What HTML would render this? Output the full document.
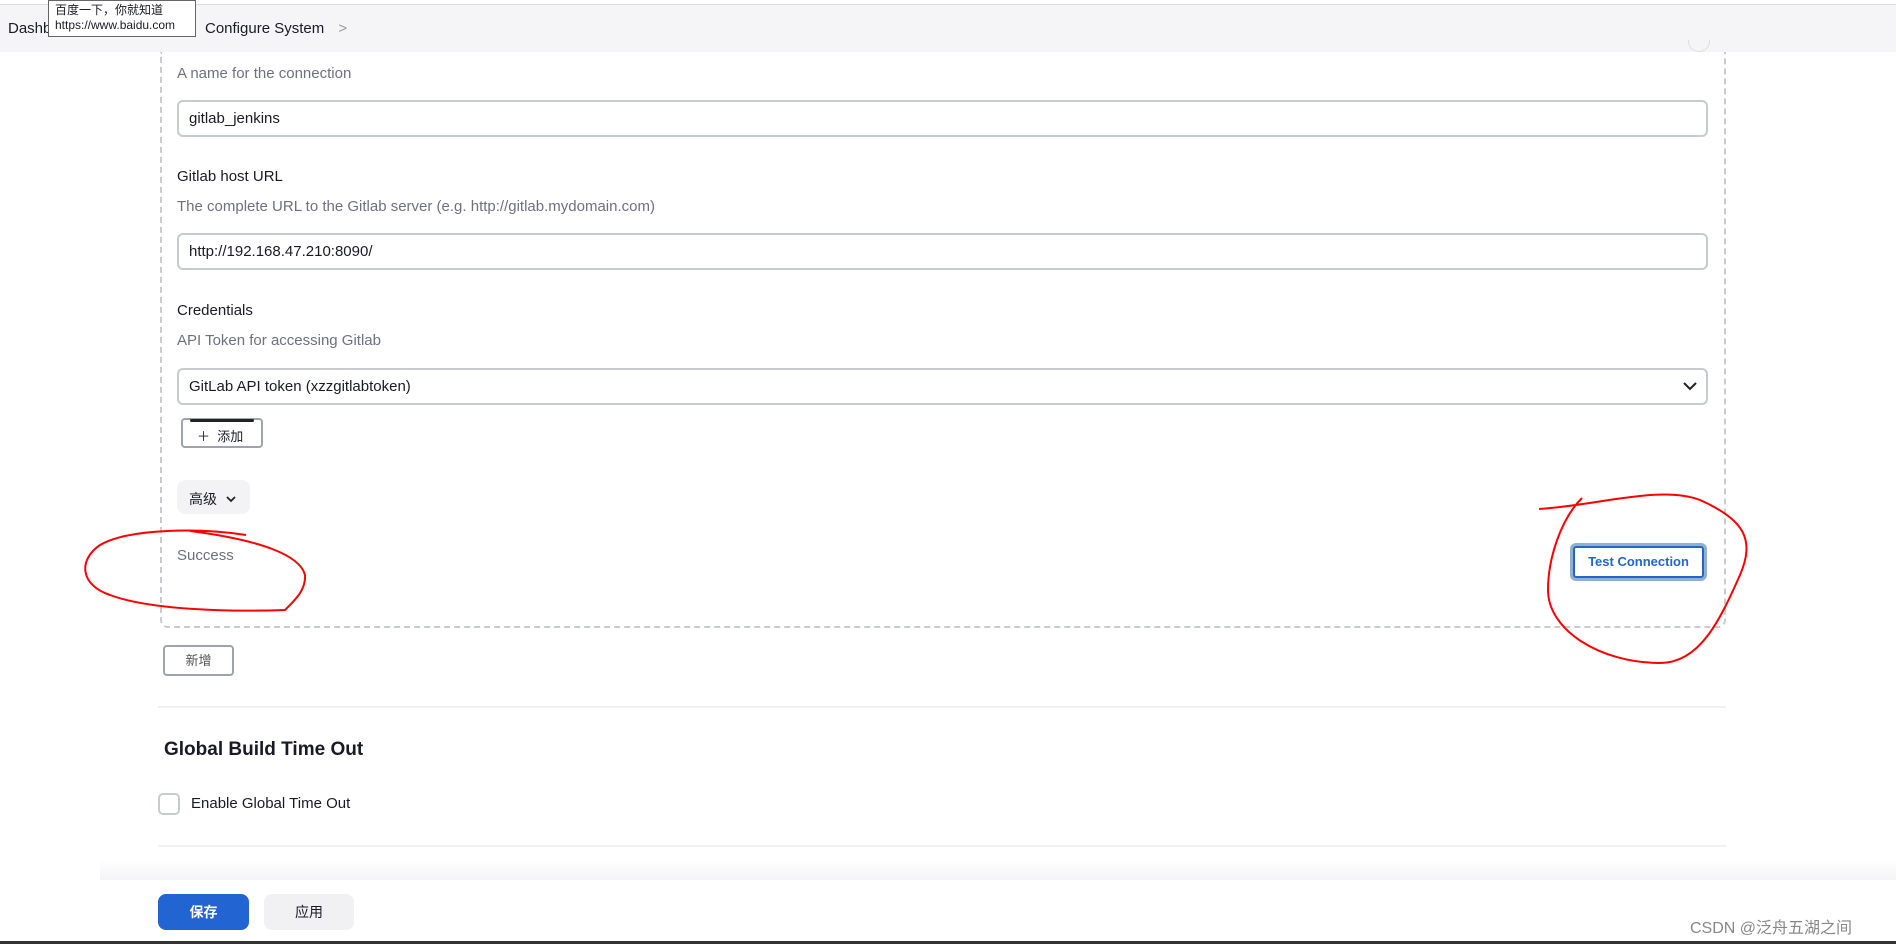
<!DOCTYPE html>
<html><head><meta charset="utf-8"><style>
*{box-sizing:border-box;margin:0;padding:0}
body{width:1896px;height:944px;position:relative;overflow:hidden;background:#fff;font-family:"Liberation Sans","Noto Sans CJK SC",sans-serif;color:#1a1a26}
.a{position:absolute}
.desc{color:#6f6f82;font-size:15px}
.lbl{font-size:15px;color:#1a1a26}
.inp{position:absolute;left:177px;width:1531px;height:37px;border:2px solid #c6cbd2;border-radius:6px;font-size:15px;padding:8px 10px;color:#1a1a26}
</style></head><body>
<div class="a" style="left:0;top:0;width:1896px;height:5px;background:#fff;border-bottom:1px solid #ddd"></div>
<div class="a" style="left:0;top:5px;width:1896px;height:47px;background:#f5f5f7"></div>
<div class="a" style="left:8px;top:20px;font-size:15px">Dashb</div>
<div class="a" style="left:205px;top:20px;font-size:15px">Configure System <span style="color:#999;margin-left:10px">&gt;</span></div>
<div class="a" style="left:48px;top:0;width:148px;height:37px;background:#fff;border:1px solid #666;font-size:12px;line-height:15px;padding:2px 6px">百度一下，你就知道<br>https://www.baidu.com</div>
<div class="a" style="left:160px;top:52px;width:1566px;height:576px;border:2px dashed #c8ccd2;border-top:none;border-radius:0 0 8px 8px"></div>
<div class="a" style="left:1688px;top:40px;width:22px;height:12px;border:1px solid #ddd;border-top:none;border-radius:0 0 11px 11px"></div>
<div class="a desc" style="left:177px;top:65px">A name for the connection</div>
<div class="inp" style="top:100px">gitlab_jenkins</div>
<div class="a lbl" style="left:177px;top:168px">Gitlab host URL</div>
<div class="a desc" style="left:177px;top:198px">The complete URL to the Gitlab server (e.g. http://gitlab.mydomain.com)</div>
<div class="inp" style="top:233px">http://192.168.47.210:8090/</div>
<div class="a lbl" style="left:177px;top:302px">Credentials</div>
<div class="a desc" style="left:177px;top:332px">API Token for accessing Gitlab</div>
<div class="inp" style="top:368px">GitLab API token (xzzgitlabtoken)</div>
<svg class="a" style="left:1682px;top:379px" width="16" height="14" viewBox="0 0 16 14"><path d="M2 4l6 6 6-6" fill="none" stroke="#222" stroke-width="2"/></svg>
<div class="a" style="left:181px;top:418px;width:82px;height:30px;border:2px solid #9ea4ad;border-radius:4px;font-size:13px;padding:6px 0 0 14px">＋&nbsp; 添加</div>
<div class="a" style="left:190px;top:419px;width:64px;height:3px;background:#222;border-radius:2px"></div>
<div class="a" style="left:177px;top:480px;width:73px;height:34px;background:#f3f3f6;border-radius:8px;font-size:14px;padding:9px 0 0 12px">高级 <svg width="12" height="10" viewBox="0 0 12 10" style="margin-left:4px"><path d="M2 3l4 4 4-4" fill="none" stroke="#222" stroke-width="1.8"/></svg></div>
<div class="a desc" style="left:177px;top:547px;font-size:15px">Success</div>
<div class="a" style="left:1570px;top:543px;width:137px;height:38px;border:3px solid #8fb0cf;border-radius:6px"></div>
<div class="a" style="left:1573px;top:546px;width:131px;height:32px;border:2px solid #2266cc;border-radius:3px;color:#2266cc;font-size:13px;font-weight:bold;text-align:center;line-height:28px">Test Connection</div>
<div class="a" style="left:163px;top:645px;width:71px;height:31px;border:2px solid #9ea4ad;border-radius:4px;font-size:13px;color:#555;text-align:center;line-height:27px">新增</div>
<div class="a" style="left:158px;top:706px;width:1568px;height:2px;background:#f1f1f5"></div>
<div class="a" style="left:164px;top:739px;font-size:19px;font-weight:bold">Global Build Time Out</div>
<div class="a" style="left:158px;top:793px;width:22px;height:22px;border:2px solid #c6cbd2;border-radius:5px"></div>
<div class="a" style="left:191px;top:795px;font-size:15px">Enable Global Time Out</div>
<div class="a" style="left:158px;top:845px;width:1568px;height:2px;background:#f1f1f5"></div>
<div class="a" style="left:100px;top:860px;width:1796px;height:20px;background:linear-gradient(#fff,#f4f4f6)"></div>
<div class="a" style="left:158px;top:894px;width:91px;height:36px;background:#2264d1;border-radius:8px;color:#fff;font-size:14px;font-weight:bold;text-align:center;line-height:36px">保存</div>
<div class="a" style="left:264px;top:894px;width:90px;height:36px;background:#f1f1f4;border-radius:8px;font-size:14px;text-align:center;line-height:36px">应用</div>
<div class="a" style="left:1690px;top:914px;font-size:16px;color:#888">CSDN @泛舟五湖之间</div>
<div class="a" style="left:0;top:941px;width:1896px;height:3px;background:#333"></div>
<svg class="a" style="left:0;top:0" width="1896" height="944">
<g fill="none" stroke="#f00" stroke-width="2">
<path d="M190,531 C260,540 300,555 305,575 C306,590 295,600 285,610 C230,612 150,610 110,595 C80,585 78,560 100,545 C130,528 200,528 246,535"/>
<path d="M1582,498 C1560,520 1548,560 1548,590 C1548,630 1600,663 1660,663 C1700,663 1720,620 1740,575 C1755,540 1745,520 1700,500 C1660,485 1600,505 1539,509"/>
</g></svg>
</body></html>
